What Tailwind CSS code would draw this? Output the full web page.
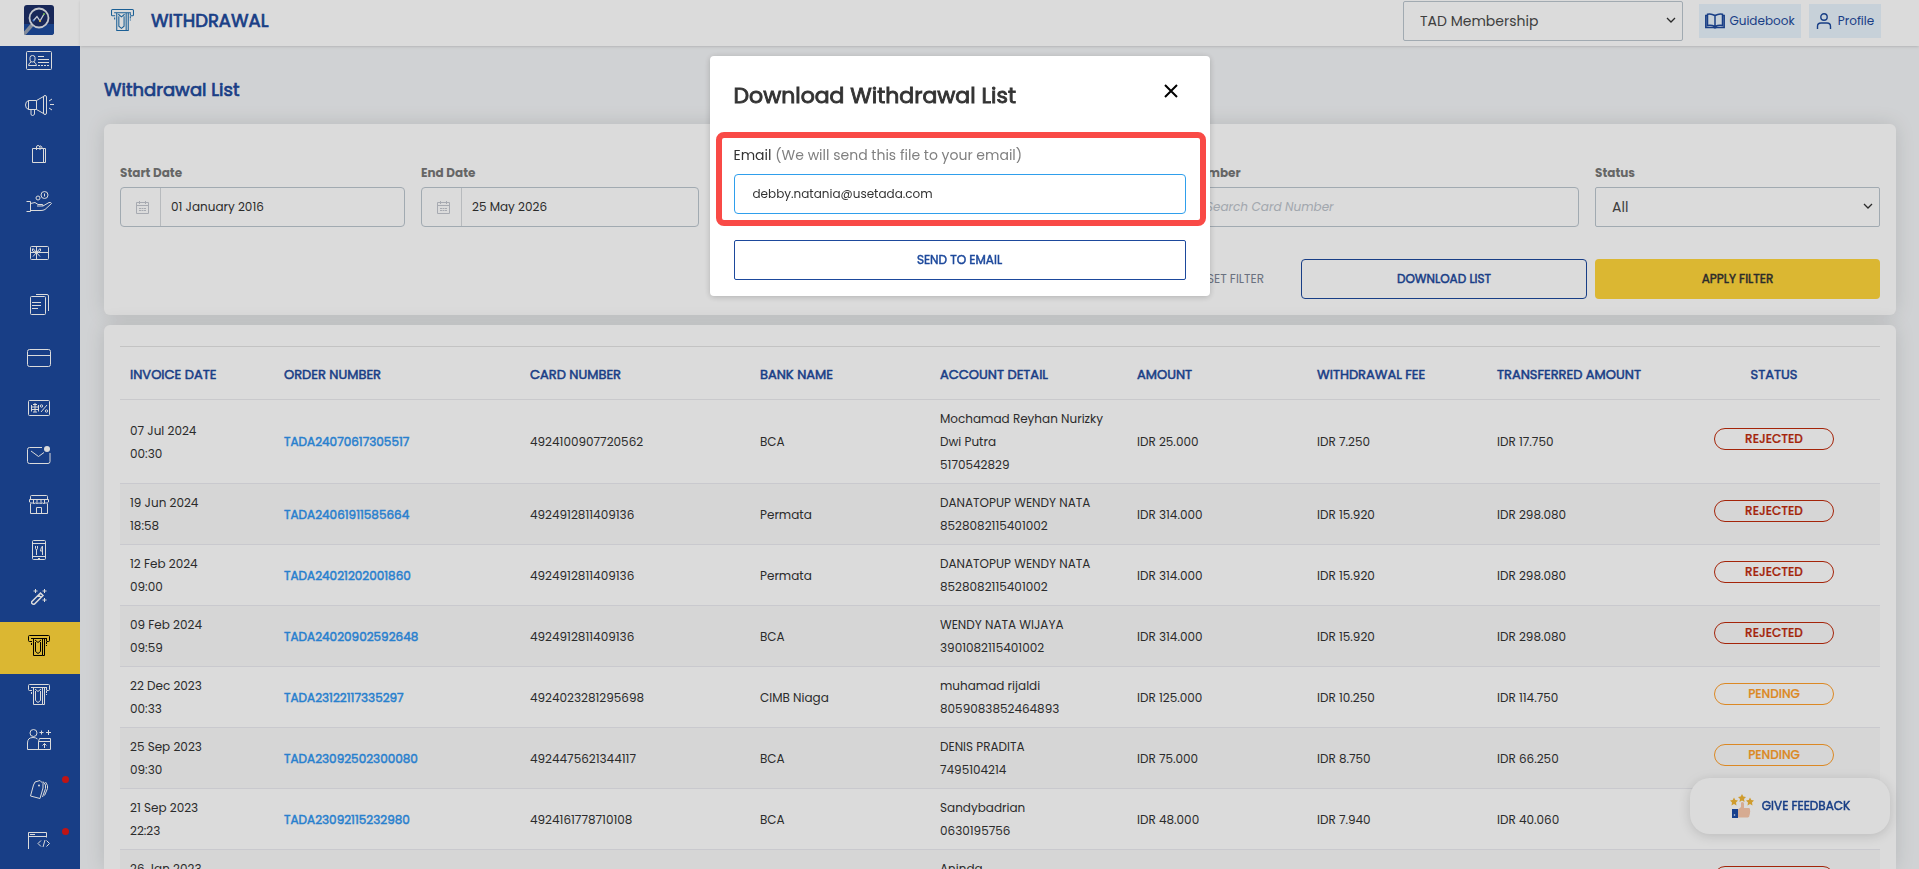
<!DOCTYPE html>
<html lang="en">
  <head>
    <meta charset="UTF-8" />
    <meta name="viewport" content="width=device-width, initial-scale=1.0" />
    <title>Withdrawal List</title>
    <script src="https://cdn.jsdelivr.net/npm/@tailwindcss/browser@4"></script>
  </head>
  <body class="h-screen overflow-hidden bg-[#f3f5f7] font-['Poppins','Inter',sans-serif] text-xs text-[#333333]">
    <!-- Icon shared by the header and the menu -->
    <svg class="hidden">
      <symbol id="atm" viewBox="0 0 22 21" fill="none" stroke="currentColor">
        <path d="M4 6.5H1.500Q.5 6.500 .5 5.500V1.500Q.5.5 1.500.5H20.500Q21.500.5 21.500 1.500V5.500Q21.500 6.500 20.500 6.500H18.500" />
        <path d="M3 3.500H19M5.500 4V20.500H14.500V4M14.500 20.500H16.500V4" />
        <path d="M7.500 7V16.500L10 18.500L12.500 16.500V7M7 5L10 7.500L13 5" />
        <path d="M3.500 8V11M18.500 4V11" stroke-dasharray="2 1" />
      </symbol>
    </svg>

    <div class="flex h-full">
      <!-- Sidebar -->
      <aside class="flex w-20 shrink-0 flex-col bg-[#1d499c]">
        <a href="#" aria-label="Home" class="flex h-[46px] shrink-0 items-start justify-center bg-white pt-[5px] pr-[2px]">
          <svg class="size-[30px]" viewBox="0 0 30 30" fill="none">
            <rect width="30" height="30" rx="3" fill="#1d2f68" />
            <path d="M0 19H30V27Q30 30 27 30H3Q0 30 0 27Z" fill="#1d4b9e" />
            <path d="M8 20L1 28" stroke="#98a2b4" stroke-width="3.500" stroke-linecap="round" />
            <circle cx="15" cy="13" r="9.500" fill="#1d2f68" stroke="#e4e8ef" stroke-width="1.800" />
            <path d="M9.500 15.500L13 11.500L16 16L20 9" stroke="#e6edfa" stroke-width="1.300" />
            <circle cx="9.500" cy="15.500" r="1" fill="#5ba0ff" />
            <circle cx="16" cy="16" r="1" fill="#ffd53b" />
            <circle cx="20" cy="9" r="1" fill="#7ed957" />
          </svg>
        </a>
        <nav class="-mt-2.5 flex flex-col pr-[2px] text-white [&>a]:flex [&>a]:shrink-0 [&>a]:items-center [&>a]:justify-center">
          <a href="#" aria-label="Members" class="h-12">
            <svg width="26" height="19" viewBox="0 0 26 19" fill="none" stroke="currentColor">
              <rect x=".5" y=".5" width="25" height="18" rx="1" />
              <path d="M4 6.500Q4 4.500 6.500 4.500T9 6.500V9Q9 11 6.500 11T4 9ZM5 11Q2.500 12.500 2.500 14.500H10.500Q10.500 12.500 8 11M12 5.500H18M12 8.500H23M12 11.500H23" />
              <path d="M12 14.500H23" stroke-dasharray="2 1" />
            </svg>
          </a>
          <a href="#" aria-label="Campaigns" class="h-11 pb-[2px]">
            <svg width="29" height="21" viewBox="0 0 29 21" fill="none" stroke="currentColor">
              <path d="M3.500 5.500H11.500V14.500H3.500Q.5 13.500 .5 10T3.500 5.500M3.500 5.500V14.500M11.500 5.500L18.500 1.500V18.500L11.500 14.500M6 14.500V19Q6 20.500 7.500 20.500T9.500 19V14.500" />
              <rect x="18.500" y=".5" width="3" height="19" rx="1.500" />
              <path d="M25 9.500H29M24 6L27 4M24 13L27 15" />
            </svg>
          </a>
          <a href="#" aria-label="Shop" class="h-13">
            <svg width="14" height="18" viewBox="0 0 14 18" fill="none" stroke="currentColor">
              <path d="M.5 3.500H13.500V17.500H.5ZM11.500 3.500V17.500M4.500 5V2Q4.500.5 6 .5T8 2V5M7 2Q8 .5 9 1T10 3" />
            </svg>
          </a>
          <a href="#" aria-label="Rewards" class="h-11 pb-[2px]">
            <svg width="26" height="21" viewBox="0 0 26 21" fill="none" stroke="currentColor">
              <circle cx="18.500" cy="4" r="3.500" />
              <path d="M18.500 2.500V5.500" />
              <circle cx="12" cy="7" r="2" />
              <path d="M.5 10.500H4.500V20.500H.5M4.500 12.500L9 11.500L12 13.500H16Q17.500 13.500 17 15H11M17 15L23 11.500Q25 11 25.500 12.500L19 18.500Q17 19.500 15 19.500H4.500" />
            </svg>
          </a>
          <a href="#" aria-label="Gift cards" class="h-14 pt-[2px]">
            <svg width="19" height="14" viewBox="0 0 19 14" fill="none" stroke="currentColor">
              <rect x=".5" y=".5" width="18" height="13" rx="1" />
              <path d="M.5 6.500H18.500M6.500 .5V13.500M6.500 6.500L3 2.500Q1.500 4 3 5.500ZL10 2.500Q11.500 4 10 5.500ZM6.500 6.500L3 10.500M6.500 6.500L10 10.500" />
            </svg>
          </a>
          <a href="#" aria-label="Reports" class="h-12">
            <svg width="19" height="21" viewBox="0 0 19 21" fill="none" stroke="currentColor">
              <rect x=".5" y="2.500" width="15" height="18" rx="1" />
              <path d="M6 .5H17Q18.500.5 18.500 2V17M2 8.500H11M2 11.500H11M2 14.500H8" />
            </svg>
          </a>
          <a href="#" aria-label="Cards" class="h-14 pt-1">
            <svg width="24" height="18" viewBox="0 0 24 18" fill="none" stroke="currentColor">
              <rect x=".5" y=".5" width="23" height="17" rx="2" />
              <path d="M.5 6.500H23.500" />
            </svg>
          </a>
          <a href="#" aria-label="Vouchers" class="h-12">
            <svg width="22" height="16" viewBox="0 0 22 16" fill="none" stroke="currentColor">
              <rect x=".5" y=".5" width="21" height="15" rx="1" />
              <path d="M5 4.500H9M3.500 7H10.500M3.500 9.500H10.500M5 12H9M3.500 5V11.500M10.500 5V11.500M7 3V12M13 12L19 5" />
              <circle cx="13.500" cy="6" r="1.200" />
              <circle cx="18.500" cy="11" r="1.200" />
            </svg>
          </a>
          <a href="#" aria-label="Messages" class="h-12 pb-1">
            <svg width="24" height="19" viewBox="0 0 24 19" fill="none" stroke="currentColor">
              <path d="M15 2.500H2.500Q.5 2.500 .5 4.500V16.500Q.5 18.500 2.500 18.500H21Q23 18.500 23 16.500V8M4 6L11.500 11.500L17 7.500" />
              <circle cx="20" cy="4" r="3" fill="currentColor" stroke="none" />
            </svg>
          </a>
          <a href="#" aria-label="Stores" class="h-12">
            <svg width="20" height="19" viewBox="0 0 20 19" fill="none" stroke="currentColor">
              <path d="M1.500 4.500V1.500Q1.500.5 2.500.5H17.500Q18.500.5 18.500 1.500V4.500M.5 4.500H19.500V7Q18.500 8.500 16.500 8Q15 9 13.500 8Q12 9 10 8Q8 9 6.500 8Q5 9 3.500 8Q1.500 8.500 .5 7ZM4.500 5V8M8 5V8M12 5V8M15.500 5V8M1.500 8.500V18.500H18.500V8.500M7.500 18.500V12.500H12.500V18.500" />
            </svg>
          </a>
          <a href="#" aria-label="Dining" class="h-11">
            <svg width="14" height="20" viewBox="0 0 14 20" fill="none" stroke="currentColor">
              <rect x=".5" y=".5" width="13" height="19" rx="1" />
              <path d="M.5 3.500H13.500M.5 16.500H13.500M3.500 6V8.500Q3.500 9.500 4.500 9.500T5.500 8.500V6M4.500 9V15M10.500 15V6Q9 7 8.500 11H10.500M6 18.500H8" />
            </svg>
          </a>
          <a href="#" aria-label="Promotions" class="h-[50px]">
            <svg width="16" height="16" viewBox="0 0 16 16" fill="none" stroke="currentColor">
              <path d="M.9 12.500L9.500 4L12 6.500L3.500 15Q2 15.500 1 14.500T.9 12.500ZM7.500 6L10 8.500" stroke-width="1.500" />
              <path d="M4.500 0V4M2.500 2H6.500M13.500 0V4M11.500 2H15.500M13.500 9V13M11.500 11H15.500" />
            </svg>
          </a>
          <a href="#" aria-label="Withdrawal" aria-current="page" class="-mr-[2px] h-13 bg-[#ffd53b] pr-[2px] pb-[6px] text-black">
            <svg width="22" height="21"><use href="#atm" /></svg>
          </a>
          <a href="#" aria-label="Withdrawal settings" class="h-10">
            <svg width="22" height="21"><use href="#atm" /></svg>
          </a>
          <a href="#" aria-label="Top up" class="h-13 pb-[2px]">
            <svg width="24" height="21" viewBox="0 0 24 21" fill="none" stroke="currentColor">
              <circle cx="6.500" cy="4" r="3.500" />
              <path d="M.5 20.500V14Q.5 8.500 6 8.500Q9 8.500 10.500 10M.5 20.500H23.500V9.500H12.500L11.500 12.500V20.500M11.500 12.500H23.500M17.500 19V14.500M15.500 16.500L17.500 14.500L19.500 16.500M12.500 3.500H16.500M14.500 1.500V5.500M19 3.500H24M21.500 1V6" />
            </svg>
          </a>
          <a href="#" aria-label="Tags" class="relative h-12 pb-[2px]">
            <svg width="18" height="19" viewBox="0 0 18 19" fill="none" stroke="currentColor">
              <path d="M5 2L10 .5L13 3.500V8L10 18.500L.5 16L3.500 5ZM13 1.500L15.500 5V8.500L12.500 17M15.500 2L17.500 5.500V8.500L14.500 15.500" />
              <circle cx="9" cy="5.500" r="1" fill="currentColor" stroke="none" />
            </svg>
            <span class="absolute top-2.5 right-[9px] size-[7px] rounded-full bg-[#df1818]"></span>
          </a>
          <a href="#" aria-label="Developer" class="relative h-13">
            <svg width="22" height="17" viewBox="0 0 22 17" fill="none" stroke="currentColor">
              <path d="M.5 17V.5H18.500V5.500M.5 4.500H18.500M2 2.500H7M13 8.500L10 11.500L13 14.500M18.500 8.500L21.500 11.500L18.500 14.500M17 8L15 15" />
            </svg>
            <span class="absolute top-3.5 right-[9px] size-[7px] rounded-full bg-[#df1818]"></span>
          </a>
        </nav>
      </aside>

      <div class="flex min-w-0 flex-1 flex-col">
        <!-- Top bar -->
        <header class="flex h-[46px] shrink-0 items-center bg-white pr-[38px] pl-[31px] text-[#1d499c] shadow-sm">
          <svg width="23" height="22" class="mb-[6px] text-[#1f6fae]"><use href="#atm" /></svg>
          <h1 class="mb-1 ml-[17px] text-lg [-webkit-text-stroke:0.04em]">WITHDRAWAL</h1>
          <div class="mb-1 ml-auto flex items-center">
            <div class="relative mr-4">
              <select aria-label="Program" class="h-10 w-[280px] appearance-none rounded-xs border border-[#bcc6cf] px-4 text-sm text-[#4a4a4a]">
                <option>TAD Membership</option>
              </select>
              <svg class="pointer-events-none absolute top-4 right-[7px]" width="10" height="7" viewBox="0 0 10 7" fill="none" stroke="#333333" stroke-width="1.300">
                <path d="M1 1L5 5L9 1" />
              </svg>
            </div>
            <a href="#" class="mr-2 flex h-[34px] w-[102px] items-center justify-center gap-1 bg-[#e8f4fd]">
              <svg width="20" height="16" viewBox="0 0 20 16" fill="none" stroke="currentColor" stroke-width="1.500">
                <path d="M10 2.500Q6 .2 2.500 1.200V12.500Q6 11.500 10 13.500Q14 11.500 17.500 12.500V1.200Q14 .2 10 2.500V13.500M2.500 2.500H.8V14.500H8.500L10 15L11.500 14.500H19.200V2.500H17.500" />
              </svg>
              Guidebook
            </a>
            <a href="#" class="flex h-[34px] w-[72px] items-center justify-center gap-[6px] bg-[#e8f4fd]">
              <svg width="16" height="16" viewBox="0 0 16 16" fill="none" stroke="currentColor" stroke-width="1.400">
                <circle cx="8" cy="4" r="3.200" />
                <path d="M1.500 16V13.500Q1.500 10 5 10H11Q14.500 10 14.500 13.500V16" />
              </svg>
              Profile
            </a>
          </div>
        </header>

        <main class="flex min-h-0 flex-1 flex-col pt-[30px] pr-[23px] pl-6">
          <h2 class="mb-5 text-lg leading-7 text-[#1d499c] [-webkit-text-stroke:0.04em]">Withdrawal List</h2>

          <!-- Filters -->
          <form class="mb-2.5 rounded-md bg-white px-4 pt-10 pb-4 shadow-[0_0_20px_rgba(0,0,0,0.12)]">
            <div class="grid grid-cols-[285fr_278fr_426fr_422fr_285fr] gap-4 [&_label]:mb-[5px] [&_label]:block [&_label]:leading-[18px] [&_label]:font-bold [&_label]:text-[#777777]">
              <div>
                <label for="startDate">Start Date</label>
                <div class="flex h-10 rounded-sm border border-[#bcc6cf]">
                  <span class="flex w-10 shrink-0 items-center justify-center border-r border-[#d5d9dd] pl-1 text-[#c3c6cf]">
                    <svg width="13" height="13" viewBox="0 0 13 13" fill="none" stroke="currentColor">
                      <path d="M.5 1.500H12.500V12.500H.5ZM.5 4.500H12.500M3.500 0V3M9.500 0V3" />
                      <path d="M3 7.500H10M3 9.500H10" stroke-dasharray="2 .5" />
                    </svg>
                  </span>
                  <input id="startDate" type="text" value="01 January 2016" class="w-full min-w-0 px-2.5 text-[#333333]" />
                </div>
              </div>
              <div>
                <label for="endDate">End Date</label>
                <div class="flex h-10 rounded-sm border border-[#bcc6cf]">
                  <span class="flex w-10 shrink-0 items-center justify-center border-r border-[#d5d9dd] pl-1 text-[#c3c6cf]">
                    <svg width="13" height="13" viewBox="0 0 13 13" fill="none" stroke="currentColor">
                      <path d="M.5 1.500H12.500V12.500H.5ZM.5 4.500H12.500M3.500 0V3M9.500 0V3" />
                      <path d="M3 7.500H10M3 9.500H10" stroke-dasharray="2 .5" />
                    </svg>
                  </span>
                  <input id="endDate" type="text" value="25 May 2026" class="w-full min-w-0 px-2.5 text-[#333333]" />
                </div>
              </div>
              <div>
                <label for="orderNumber">Order Number</label>
                <input id="orderNumber" type="text" class="h-10 w-full rounded-sm border border-[#bcc6cf] px-12" />
              </div>
              <div>
                <label for="cardNumber">Card Number</label>
                <input
                  id="cardNumber"
                  type="text"
                  placeholder="Search Card Number"
                  class="h-10 w-full rounded-sm border border-[#bcc6cf] px-12 placeholder:text-[#bcc3cb] placeholder:italic"
                />
              </div>
              <div>
                <label for="status">Status</label>
                <div class="relative">
                  <select id="status" class="h-10 w-full appearance-none rounded-xs border border-[#bcc6cf] px-4 text-sm text-[#4a4a4a]">
                    <option>All</option>
                  </select>
                  <svg class="pointer-events-none absolute top-4 right-[7px]" width="10" height="7" viewBox="0 0 10 7" fill="none" stroke="#333333" stroke-width="1.300">
                    <path d="M1 1L5 5L9 1" />
                  </svg>
                </div>
              </div>
            </div>
            <div class="mt-8 flex items-center justify-end gap-2">
              <button type="reset" class="mr-[29px] text-[#7c8494]">RESET FILTER</button>
              <button type="button" class="h-10 w-[286px] rounded-sm border border-[#1d499c] text-[#1d499c] [-webkit-text-stroke:0.04em]">DOWNLOAD LIST</button>
              <button type="button" class="h-10 w-[285px] rounded-sm bg-[#ffd53b] text-[#333333] [-webkit-text-stroke:0.04em]">APPLY FILTER</button>
            </div>
          </form>

          <!-- Withdrawals -->
          <section class="min-h-0 flex-1 overflow-hidden rounded-t-md bg-white px-4 pt-[21px] shadow-[0_0_20px_rgba(0,0,0,0.12)]">
            <table class="w-full table-fixed border-t border-[#e4e4e4]">
              <thead>
                <tr class="h-[53px] border-b border-[#ebebee] text-left text-[13px] text-[#1d499c] [&>th]:px-2.5 [&>th]:pt-1 [&>th]:font-normal [&>th]:[-webkit-text-stroke:0.04em]">
                  <th class="w-[154px]">INVOICE DATE</th>
                  <th class="w-[246px]">ORDER NUMBER</th>
                  <th class="w-[230px]">CARD NUMBER</th>
                  <th class="w-[180px]">BANK NAME</th>
                  <th class="w-[197px]">ACCOUNT DETAIL</th>
                  <th class="w-[180px]">AMOUNT</th>
                  <th class="w-[180px]">WITHDRAWAL FEE</th>
                  <th class="w-[181px]">TRANSFERRED AMOUNT</th>
                  <th class="w-[212px] text-center">STATUS</th>
                </tr>
              </thead>
              <tbody id="withdrawalList">
                <!-- Rows will be loaded here -->
              </tbody>
            </table>
          </section>
        </main>
      </div>
    </div>

    <button type="button" class="fixed right-[29px] bottom-[35px] flex h-14 w-[200px] items-center justify-center gap-2 rounded-[20px] bg-white text-[#1d499c] shadow-[0_2px_12px_rgba(0,0,0,0.15)] [-webkit-text-stroke:0.04em]">
      <svg width="24" height="24" viewBox="0 0 24 24">
        <path id="star" d="M12 0L13.300 2.600L16 3L14 5L14.500 8L12 6.600L9.500 8L10 5L8 3L10.700 2.600Z" fill="#f2b636" />
        <use href="#star" x="-8" y="3.500" />
        <use href="#star" x="8" y="3.500" />
        <rect x="2" y="15" width="6" height="9" fill="#1d4ba5" />
        <circle cx="4.500" cy="21" r=".8" fill="#fff" />
        <path d="M8 15.500L11 13V9Q11 8 12.500 8T14 10V14H19Q20.500 14.500 20 16Q20.500 17.500 20 18.500Q20 20 19.500 21Q19.500 23 18 23.500H8Z" fill="#fac8aa" />
      </svg>
      GIVE FEEDBACK
    </button>

    <!-- Download dialog -->
    <div id="downloadModal" class="fixed inset-0 bg-black/14 pt-14">
      <div role="dialog" aria-labelledby="downloadTitle" class="relative mx-auto w-[500px] rounded-sm bg-white px-6 pt-6 pb-4 shadow-[0_1px_6px_rgba(0,0,0,0.2)]">
        <div class="flex items-start justify-between">
          <h3 id="downloadTitle" class="text-[22px] leading-8 [-webkit-text-stroke:0.04em]">Download Withdrawal List</h3>
          <button type="button" aria-label="Close" onclick="closeModal()" class="mt-1 mr-2 text-black">
            <svg width="14" height="14" viewBox="0 0 14 14" fill="none" stroke="currentColor" stroke-width="2">
              <path d="M1 1L13 13M13 1L1 13" />
            </svg>
          </button>
        </div>
        <label for="email" class="mt-8 mb-2 block text-sm leading-[22px]">Email <span class="text-[#808080]">(We will send this file to your email)</span></label>
        <input id="email" type="email" value="debby.natania@usetada.com" class="block h-10 w-full rounded-sm border border-[#2f9fec] px-[18px]" />
        <button type="button" class="mt-[26px] block h-10 w-full rounded-xs border border-[#1d499c] text-[#1d499c] [-webkit-text-stroke:0.04em]">SEND TO EMAIL</button>
        <div class="pointer-events-none absolute top-[76px] right-1 left-[6px] h-[94px] rounded-lg border-6 border-[#f94a46]"></div>
      </div>
    </div>

    <script>
      const withdrawals = [
        ["07 Jul 2024", "00:30", "TADA24070617305517", "4924100907720562", "BCA", "Mochamad Reyhan Nurizky Dwi Putra", "5170542829", "25.000", "7.250", "17.750", "REJECTED"],
        ["19 Jun 2024", "18:58", "TADA24061911585664", "4924912811409136", "Permata", "DANATOPUP WENDY NATA", "8528082115401002", "314.000", "15.920", "298.080", "REJECTED"],
        ["12 Feb 2024", "09:00", "TADA24021202001860", "4924912811409136", "Permata", "DANATOPUP WENDY NATA", "8528082115401002", "314.000", "15.920", "298.080", "REJECTED"],
        ["09 Feb 2024", "09:59", "TADA24020902592648", "4924912811409136", "BCA", "WENDY NATA WIJAYA", "3901082115401002", "314.000", "15.920", "298.080", "REJECTED"],
        ["22 Dec 2023", "00:33", "TADA23122117335297", "4924023281295698", "CIMB Niaga", "muhamad rijaldi", "8059083852464893", "125.000", "10.250", "114.750", "PENDING"],
        ["25 Sep 2023", "09:30", "TADA23092502300080", "4924475621344117", "BCA", "DENIS PRADITA", "7495104214", "75.000", "8.750", "66.250", "PENDING"],
        ["21 Sep 2023", "22:23", "TADA23092115232980", "4924161778710108", "BCA", "Sandybadrian", "0630195756", "48.000", "7.940", "40.060", "PENDING"],
        ["26 Jan 2023", "10:12", "TADA23012603124410", "4924161778710108", "BCA", "Aninda", "0630195756", "50.000", "8.000", "42.000", "REJECTED"],
      ];

      document.getElementById("withdrawalList").innerHTML = withdrawals
        .map(
          ([date, time, order, card, bank, name, account, amount, fee, transferred, status]) => `
            <tr class="border-b border-[#ebebf0] leading-[23px] even:bg-[#fafafa] [&>td]:px-2.5 [&>td]:py-[7px]">
              <td>${date}<br />${time}</td>
              <td><a href="#" class="text-[#2f95f0] [-webkit-text-stroke:0.04em]">${order}</a></td>
              <td>${card}</td>
              <td>${bank}</td>
              <td>${name}<br />${account}</td>
              <td>IDR ${amount}</td>
              <td>IDR ${fee}</td>
              <td>IDR ${transferred}</td>
              <td>
                <span class="mx-auto mb-[6px] block h-[22px] w-[120px] rounded-full border text-center leading-5 font-medium [-webkit-text-stroke:0.02em] ${
                  status === "REJECTED" ? "border-[#bf2a0b] text-[#bf2a0b]" : "border-[#ff9f2a] text-[#ff9f2a]"
                }">${status}</span>
              </td>
            </tr>
          `,
        )
        .join("");

      function closeModal() {
        document.getElementById("downloadModal").classList.add("hidden");
      }
    </script>
  </body>
</html>
